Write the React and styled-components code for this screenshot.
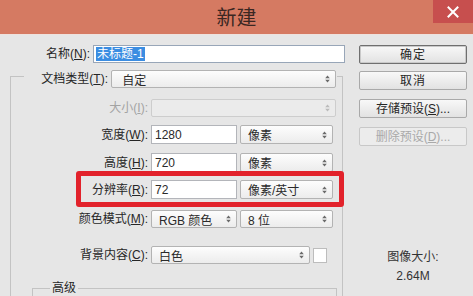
import React from "react";
import styled, { createGlobalStyle, css } from "styled-components";

const Global = createGlobalStyle`
  html, body {
    margin: 0;
    padding: 0;
    width: 473px;
    height: 296px;
    overflow: hidden;
    background: #e6e6e6;
  }
  body {
    font-family: "Liberation Sans", "Noto Sans CJK SC", sans-serif;
    font-size: 12px;
    color: #262626;
  }
  *, *::before, *::after { box-sizing: border-box; }
`;

const Window = styled.div`
  width: 473px;
  height: 296px;
  display: flex;
  flex-direction: column;
  background: #e6e6e6;
  overflow: hidden;
`;

const TitleBar = styled.header`
  flex: none;
  height: 35px;
  display: grid;
  grid-template-columns: 40px 1fr 40px;
  background: #d57a62;
  border-bottom: 1px solid #eee2de;
`;

const Title = styled.h1`
  grid-column: 2;
  margin: 0;
  align-self: center;
  text-align: center;
  font: 400 20px/1 "Noto Sans CJK SC", sans-serif;
  color: #3b2722;
`;

const CloseButton = styled.div`
  grid-column: 3;
  height: 23px;
  background: #c74f4e;
  display: flex;
  align-items: center;
  justify-content: center;
`;

const Body = styled.main`
  flex: 1;
  display: flex;
  padding-top: 10px;
  min-height: 0;
`;

const LeftColumn = styled.section`
  width: 345px;
  display: flex;
  flex-direction: column;
`;

const RightColumn = styled.aside`
  width: 108px;
  margin-left: 14px;
  display: flex;
  flex-direction: column;
`;

const Row = styled.div`
  display: flex;
  align-items: center;
  gap: 3px;
  margin-top: ${(p) => p.$mt || 0}px;
  position: relative;
  ${(p) =>
    p.$highlight &&
    css`
      &::after {
        content: "";
        position: absolute;
        left: 52px;
        top: -9px;
        width: 268px;
        height: 36px;
        border: 5px solid #e2222b;
        border-radius: 3px;
        pointer-events: none;
      }
    `}
`;

const Label = styled.label`
  width: ${(p) => p.$w}px;
  flex: none;
  text-align: right;
  white-space: nowrap;
  line-height: 16px;
  color: ${(p) => (p.$disabled ? "#a3a3a3" : "#262626")};
  u {
    text-decoration: underline;
    text-underline-offset: 1px;
  }
`;

const TextField = styled.div`
  width: ${(p) => p.$w}px;
  height: ${(p) => p.$h || 19}px;
  flex: none;
  background: #fff;
  border: 1px solid ${(p) => (p.$focused ? "#98a6b8" : "#b3b5ba")};
  padding: 0 3px;
  display: flex;
  align-items: center;
  color: #2a2a2a;
  line-height: 14px;
`;

const Selected = styled.span`
  background: #3b8de2;
  color: #fff;
  padding: 0 1px;
  margin-left: -1px;
  line-height: 14px;
`;

const Select = styled.div`
  width: ${(p) => p.$w}px;
  height: ${(p) => p.$h || 18}px;
  flex: none;
  border: 1px solid ${(p) => (p.$disabled ? "#cdcdcd" : "#b3b3b3")};
  border-radius: 2px;
  background: ${(p) =>
    p.$disabled ? "#ebebeb" : "linear-gradient(#fdfdfd, #ececec)"};
  display: flex;
  align-items: center;
  justify-content: space-between;
  padding: 0 5px 0 7px;
  color: #2a2a2a;
  white-space: nowrap;
`;

const Swatch = styled.div`
  width: 14px;
  height: 15px;
  flex: none;
  background: #fff;
  border: 1px solid #bdbdbd;
`;

const Group = styled.fieldset`
  margin: 1px 0 0 10px;
  width: 333px;
  min-width: 0;
  border: 1px solid #c3c3c3;
  padding: 0 5px 0 13px;
  display: block;
`;

const GroupLegend = styled.legend`
  padding: 6px 1px 0 0;
  margin: 0;
`;

const SubGroup = styled.fieldset`
  margin: 16px 0 0 8px;
  width: 305px;
  min-width: 0;
  height: 40px;
  border: 1px solid #c3c3c3;
  padding: 0 0 0 17px;
`;

const SubLegend = styled.legend`
  padding: 0 2px;
  line-height: 16px;
  color: #262626;
`;

const Button = styled.button`
  width: 108px;
  height: 19px;
  margin-top: ${(p) => p.$mt || 0}px;
  padding: 0;
  font: inherit;
  font-size: 12px;
  line-height: 1;
  letter-spacing: ${(p) => (p.$wide ? "1px" : "0")};
  color: ${(p) => (p.$disabled ? "#a9a9a9" : "#262626")};
  border: 1px solid
    ${(p) => (p.$default ? "#6f6f6f" : p.$disabled ? "#c8c8c8" : "#a9a9a9")};
  box-shadow: ${(p) => (p.$default ? "inset 0 0 0 1px #c9c9c9" : "none")};
  border-radius: 2px;
  background: ${(p) =>
    p.$disabled ? "#ececec" : "linear-gradient(#f8f8f8, #e2e2e2)"};
  u {
    text-underline-offset: 1px;
  }
`;

const Info = styled.div`
  text-align: center;
  line-height: 16px;
  color: #333;
  margin-top: ${(p) => p.$mt || 0}px;
`;

const Arrow = ({ disabled }) => (
  <svg width="5" height="8" viewBox="0 0 5 8" aria-hidden="true">
    <path d="M2.5 0.5 L4.8 3.3 H0.2 Z M2.5 7.5 L4.8 4.7 H0.2 Z" fill={disabled ? "#bbb" : "#6a6a6a"} />
  </svg>
);

const CloseIcon = () => (
  <svg width="12" height="12" viewBox="0 0 12 12" aria-hidden="true">
    <path d="M1.5 1.5 L10.5 10.5 M10.5 1.5 L1.5 10.5" stroke="#fff" strokeWidth="2" strokeLinecap="square" />
  </svg>
);

const SelectBox = ({ w, h, disabled, children }) => (
  <Select $w={w} $h={h} $disabled={disabled}>
    <span>{children}</span>
    <Arrow disabled={disabled} />
  </Select>
);

export default function App() {
  return (
    <Window>
      <Global />
      <TitleBar>
        <Title>新建</Title>
        <CloseButton>
          <CloseIcon />
        </CloseButton>
      </TitleBar>
      <Body>
        <LeftColumn>
          <Row>
            <Label $w={90}>
              名称(<u>N</u>):
            </Label>
            <TextField $w={252} $h={18} $focused>
              <Selected>未标题-1</Selected>
            </TextField>
          </Row>
          <Group>
            <GroupLegend>
              <Row>
                <Label $w={84}>
                  文档类型(<u>T</u>):
                </Label>
                <SelectBox w={225}>&nbsp;自定</SelectBox>
              </Row>
            </GroupLegend>
            <Row $mt={11}>
              <Label $w={124} $disabled>
                大小(<u>I</u>):
              </Label>
              <SelectBox w={185} disabled></SelectBox>
            </Row>
            <Row $mt={8}>
              <Label $w={124}>
                宽度(<u>W</u>):
              </Label>
              <TextField $w={86}>1280</TextField>
              <SelectBox w={93} h={19}>像素</SelectBox>
            </Row>
            <Row $mt={9}>
              <Label $w={124}>
                高度(<u>H</u>):
              </Label>
              <TextField $w={86}>720</TextField>
              <SelectBox w={93} h={19}>像素</SelectBox>
            </Row>
            <Row $mt={8} $highlight>
              <Label $w={124}>
                分辨率(<u>R</u>):
              </Label>
              <TextField $w={86}>72</TextField>
              <SelectBox w={93} h={19}>像素/英寸</SelectBox>
            </Row>
            <Row $mt={11}>
              <Label $w={124}>
                颜色模式(<u>M</u>):
              </Label>
              <SelectBox w={86}>RGB 颜色</SelectBox>
              <SelectBox w={93}>8 位</SelectBox>
            </Row>
            <Row $mt={18}>
              <Label $w={124}>
                背景内容(<u>C</u>):
              </Label>
              <SelectBox w={159}>白色</SelectBox>
              <Swatch />
            </Row>
            <SubGroup>
              <SubLegend>高级</SubLegend>
            </SubGroup>
          </Group>
        </LeftColumn>
        <RightColumn>
          <Button $default $wide>确定</Button>
          <Button $mt={7} $wide>取消</Button>
          <Button $mt={9}>
            存储预设(<u>S</u>)...
          </Button>
          <Button $mt={9} $disabled>
            删除预设(<u>D</u>)...
          </Button>
          <Info $mt={103}>图像大小:</Info>
          <Info $mt={3}>2.64M</Info>
        </RightColumn>
      </Body>
    </Window>
  );
}
